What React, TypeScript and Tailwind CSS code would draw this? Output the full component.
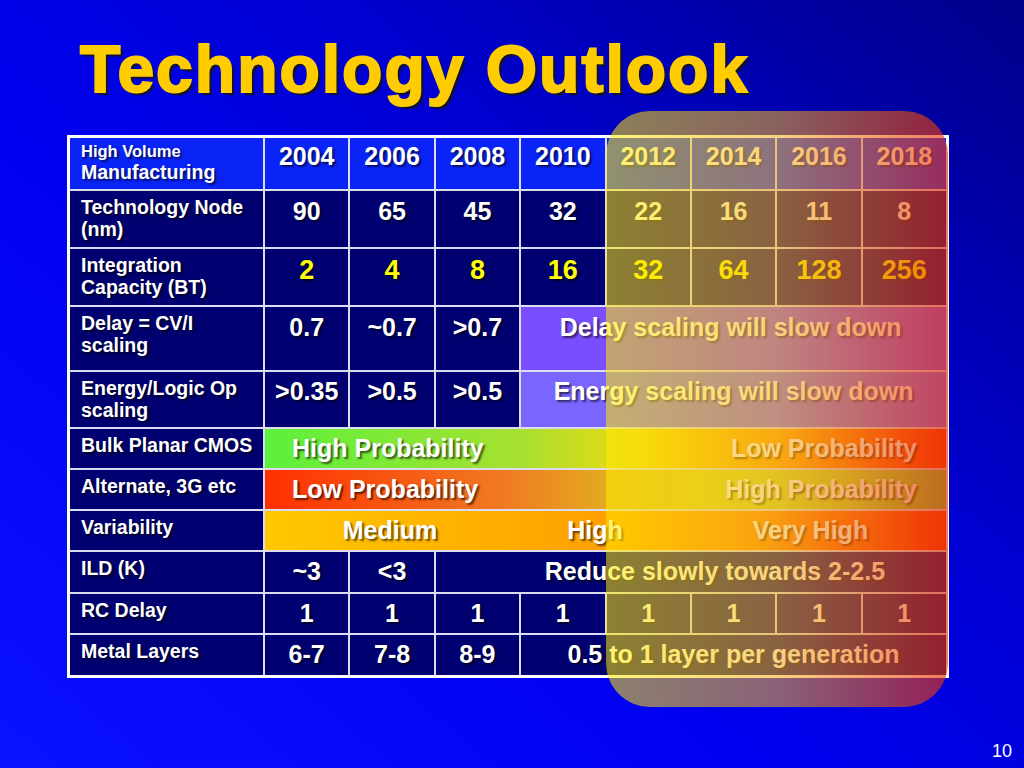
const years = ['2004', '2006', '2008', '2010', '2012', '2014', '2016', '2018'];

const shadow = '[text-shadow:2px_2px_2px_rgba(0,0,0,0.6)]';

function Label({ children, bg = 'bg-[#000070]' }: { children: React.ReactNode; bg?: string }) {
    return (
        <div className={`${bg} pl-[11px] pt-[5px] pr-1 text-[19.5px] leading-[22px] font-bold text-white ${shadow}`}>
            {children}
        </div>
    );
}

function Val({ children, className = '' }: { children: React.ReactNode; className?: string }) {
    return (
        <div className={`bg-[#000070] pt-[5px] text-center text-[25px] leading-[29px] font-bold text-white ${shadow} ${className}`}>
            {children}
        </div>
    );
}

export default function App() {
    return (
        <div
            className="flex h-[768px] w-[1024px] flex-col overflow-hidden bg-[linear-gradient(220deg,#000088_0%,#0000d0_35%,#0000f0_60%,#0a12ff_100%)]"
            style={{ fontFamily: '"Liberation Sans", Arial, sans-serif' }}
        >
            <h1 className="ml-[80px] mt-[36px] text-[66px] leading-[66px] font-bold tracking-[2px] text-[#ffcc00] [-webkit-text-stroke:2px_#ffcc00] [text-shadow:3px_3px_1px_rgba(20,20,30,0.9)]">
                Technology Outlook
            </h1>

            <div className="relative ml-[67px] mt-[33px] w-[882px]">
                <div className="grid grid-cols-[193px_repeat(8,minmax(0,1fr))] grid-rows-[51px_56px_56px_63px_55px_39px_39px_39px_40px_39px_40px] gap-[2px] border-[3px] border-white bg-[#dcdcf0]">
                    {/* header */}
                    <div className={`bg-[#0a24f8] pl-[11px] pt-[3px] font-bold text-white ${shadow}`}>
                        <div className="text-[16.5px] leading-[20px]">High Volume</div>
                        <div className="text-[19.5px] leading-[22px]">Manufacturing</div>
                    </div>
                    {years.map((y) => (
                        <Val key={y} className="!bg-[#0a24f8] !pt-[4px]">{y}</Val>
                    ))}

                    {/* technology node */}
                    <Label>Technology Node (nm)</Label>
                    {['90', '65', '45', '32', '22', '16', '11', '8'].map((v, i) => (
                        <Val key={i} className="!pt-[6px]">{v}</Val>
                    ))}

                    {/* integration capacity */}
                    <Label>Integration Capacity (BT)</Label>
                    {['2', '4', '8', '16', '32', '64', '128', '256'].map((v, i) => (
                        <Val key={i} className="!pt-[6px] !text-[27px] !leading-[31px] !text-[#ffff00]">{v}</Val>
                    ))}

                    {/* delay */}
                    <Label>Delay = CV/I scaling</Label>
                    <Val className="!pt-[6px]">0.7</Val>
                    <Val className="!pt-[6px]">~0.7</Val>
                    <Val className="!pt-[6px]">&gt;0.7</Val>
                    <Val className="col-span-5 !bg-[#7a4eff] !pt-[6px] !pr-[6px]">Delay scaling will slow down</Val>

                    {/* energy */}
                    <Label>Energy/Logic Op scaling</Label>
                    <Val>&gt;0.35</Val>
                    <Val>&gt;0.5</Val>
                    <Val>&gt;0.5</Val>
                    <Val className="col-span-5 !bg-[#7a66ff]">Energy scaling will slow down</Val>

                    {/* bulk planar */}
                    <Label>Bulk Planar CMOS</Label>
                    <div className={`col-span-8 flex justify-between bg-[linear-gradient(90deg,#5cf03c_0%,#a8e030_38%,#f0d810_55%,#ff9a00_78%,#ff3300_100%)] pl-[27px] pr-[29px] pt-[5px] text-[25px] leading-[29px] font-bold text-white ${shadow}`}>
                        <span>High Probability</span>
                        <span>Low Probability</span>
                    </div>

                    {/* alternate */}
                    <Label>Alternate, 3G etc</Label>
                    <div className={`col-span-8 flex justify-between bg-[linear-gradient(90deg,#ff3000_0%,#f07a22_35%,#d8d820_65%,#b8e030_85%,#70d040_100%)] pl-[27px] pr-[29px] pt-[5px] text-[25px] leading-[29px] font-bold text-white ${shadow}`}>
                        <span>Low Probability</span>
                        <span>High Probability</span>
                    </div>

                    {/* variability */}
                    <Label>Variability</Label>
                    <div className={`col-span-8 grid grid-cols-[250px_160px_1fr] bg-[linear-gradient(90deg,#ffc800_0%,#ffa800_40%,#ff9000_70%,#ff3300_100%)] pt-[5px] text-center text-[25px] leading-[29px] font-bold text-white ${shadow}`}>
                        <span>Medium</span>
                        <span>High</span>
                        <span>Very High</span>
                    </div>

                    {/* ILD */}
                    <Label>ILD (K)</Label>
                    <Val>~3</Val>
                    <Val>&lt;3</Val>
                    <Val className="col-span-6 !pl-[48px]">Reduce slowly towards 2-2.5</Val>

                    {/* RC delay */}
                    <Label>RC Delay</Label>
                    {years.map((y) => (
                        <Val key={y}>1</Val>
                    ))}

                    {/* metal layers */}
                    <Label>Metal Layers</Label>
                    <Val>6-7</Val>
                    <Val>7-8</Val>
                    <Val>8-9</Val>
                    <Val className="col-span-5">0.5 to 1 layer per generation</Val>
                </div>

                {/* highlight over future nodes */}
                <div className="pointer-events-none absolute left-[539px] top-[-24px] h-[596px] w-[342px] rounded-[44px] bg-[linear-gradient(90deg,rgba(255,235,0,0.55)_0%,rgba(245,175,30,0.56)_50%,rgba(230,50,10,0.64)_100%)]" />
            </div>

            <div className="mt-auto flex justify-end pb-[8px] pr-[12px] text-[18px] leading-[18px] text-white">10</div>
        </div>
    );
}
